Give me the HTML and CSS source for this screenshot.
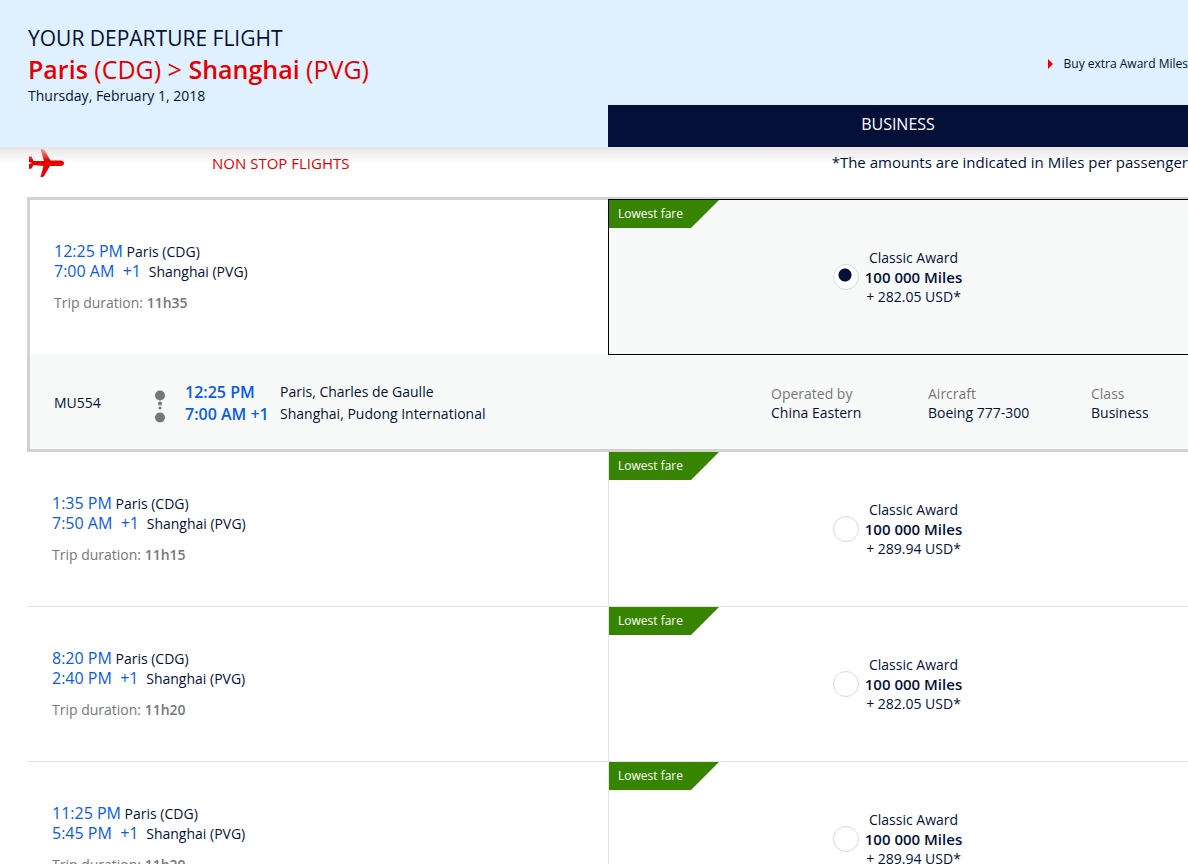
FILE: index.html
```html
<!DOCTYPE html>
<html lang="en">
<head>
<meta charset="utf-8">
<title>Your departure flight</title>
<link rel="stylesheet" href="styles.css">
</head>
<body>
<header class="header">
  <div class="trip">
    <h1 class="trip-title">YOUR DEPARTURE FLIGHT</h1>
    <h2 class="trip-route"><b>Paris</b> (CDG) &gt; <b>Shanghai</b> (PVG)</h2>
    <p class="trip-date">Thursday, February 1, 2018</p>
  </div>
  <div class="header-side">
    <a class="buy" href="#"><svg class="buy-icon" viewBox="0 0 5 10"><path d="M0 0L5 5L0 10Z" fill="#e80000"/></svg>Buy extra Award Miles</a>
    <div class="cabin">BUSINESS</div>
  </div>
</header>
<main class="results">
  <div class="legend">
    <svg class="plane" viewBox="0 0 36 28"><defs><linearGradient id="pg" x2="0" y2="1"><stop offset="0" stop-color="#e80000" stop-opacity=".3"/><stop offset=".4" stop-color="#e80000"/></linearGradient></defs><path fill="url(#pg)" d="M1 7.500H3.500L5.500 12H16L12.500 0H14.500Q16 0 17 2L22.500 11.500H33Q36 12 36 14Q36 16.500 33 17H22L16 27Q15.500 28 14 28H12.500L15.500 17L5.500 16L3.500 19.500L1 20V15L4 14L1 13Z"/></svg>
    <span class="nonstop">NON STOP FLIGHTS</span>
    <span class="note">*The amounts are indicated in Miles per passenger</span>
  </div>
  <section class="card">
    <div class="flight">
      <div class="times">
        <p class="line"><span class="time">12:25 PM</span> Paris (CDG)</p>
        <p class="line"><span class="time">7:00 AM &nbsp;+1&nbsp;</span> Shanghai (PVG)</p>
        <p class="duration">Trip duration: <b>11h35</b></p>
      </div>
      <div class="fare fare-selected">
        <span class="ribbon">Lowest fare</span>
        <label class="option"><input class="radio" type="radio" name="fare" checked><span class="price">Classic Award<b>100 000 Miles</b>+ 282.05 USD*</span></label>
      </div>
    </div>
    <div class="segment">
      <span class="number">MU554</span>
      <svg class="stops" viewBox="0 0 10 40"><g fill="#777"><circle cx="5" cy="12.500" r="5"/><circle cx="5" cy="20.500" r="2"/><circle cx="5" cy="25" r="1.500"/><circle cx="5" cy="34.500" r="5"/></g></svg>
      <div class="seg-times"><div>12:25 PM</div><div>7:00 AM +1</div></div>
      <div class="seg-places"><div>Paris, Charles de Gaulle</div><div>Shanghai, Pudong International</div></div>
      <dl class="facts">
        <div class="fact"><dt>Operated by</dt><dd>China Eastern</dd></div>
        <div class="fact"><dt>Aircraft</dt><dd>Boeing 777-300</dd></div>
        <div class="fact"><dt>Class</dt><dd>Business</dd></div>
      </dl>
    </div>
  </section>
  <div class="flight row">
    <div class="times">
      <p class="line"><span class="time">1:35 PM</span> Paris (CDG)</p>
      <p class="line"><span class="time">7:50 AM &nbsp;+1&nbsp;</span> Shanghai (PVG)</p>
      <p class="duration">Trip duration: <b>11h15</b></p>
    </div>
    <div class="fare">
      <span class="ribbon">Lowest fare</span>
      <label class="option"><input class="radio" type="radio" name="fare"><span class="price">Classic Award<b>100 000 Miles</b>+ 289.94 USD*</span></label>
    </div>
  </div>
  <div class="flight row">
    <div class="times">
      <p class="line"><span class="time">8:20 PM</span> Paris (CDG)</p>
      <p class="line"><span class="time">2:40 PM &nbsp;+1&nbsp;</span> Shanghai (PVG)</p>
      <p class="duration">Trip duration: <b>11h20</b></p>
    </div>
    <div class="fare">
      <span class="ribbon">Lowest fare</span>
      <label class="option"><input class="radio" type="radio" name="fare"><span class="price">Classic Award<b>100 000 Miles</b>+ 282.05 USD*</span></label>
    </div>
  </div>
  <div class="flight row">
    <div class="times">
      <p class="line"><span class="time">11:25 PM</span> Paris (CDG)</p>
      <p class="line"><span class="time">5:45 PM &nbsp;+1&nbsp;</span> Shanghai (PVG)</p>
      <p class="duration">Trip duration: <b>11h20</b></p>
    </div>
    <div class="fare">
      <span class="ribbon">Lowest fare</span>
      <label class="option"><input class="radio" type="radio" name="fare"><span class="price">Classic Award<b>100 000 Miles</b>+ 289.94 USD*</span></label>
    </div>
  </div>
</main>
</body>
</html>
```
FILE: styles.css
```css
* { box-sizing: border-box; }
body { margin: 0; background: #fff; color: #051039; font: 14px/20px "Open Sans", sans-serif; }
h1, h2, p, dl, dd { margin: 0; font-weight: 400; }
.header { display: grid; grid-template-columns: 1fr 1fr; padding-left: 28px; background: #dff1fe; }
.trip { padding: 24px 0 42px; }
.trip-title { font-size: 21px; line-height: 28px; }
.trip-route { color: #e80000; font-size: 25px; line-height: 34px; }
.trip-route b { font-weight: 600; }
.trip-date { font-size: 14px; line-height: 19px; }
.header-side { display: flex; flex-direction: column; justify-content: space-between; padding-top: 54px; }
.buy { align-self: flex-end; display: flex; align-items: center; gap: 11px; color: #051039; font-size: 12px; text-decoration: none; white-space: nowrap; }
.buy-icon { width: 5px; height: 10px; }
.cabin { height: 42px; background: #051039; color: #fff; font-size: 16px; line-height: 39px; text-align: center; }
.results { padding-left: 28px; background: linear-gradient(#e8e4e6, #fff 16px); }
.legend { display: flex; align-items: flex-start; height: 50px; padding-top: 2px; }
.plane { width: 36px; height: 28px; }
.nonstop { margin-left: 148px; padding-top: 4px; color: #e80000; font-size: 15px; }
.note { margin-left: auto; padding-top: 3px; font-size: 15px; }
.card { margin-left: -1px; border: 3px solid #d2d2d2; border-right: 0; background: #fff; }
.flight { display: grid; grid-template-columns: 1fr 1fr; }
.times { padding: 42px 0 41px 24px; }
.card .fare-selected { z-index: 1; margin: -1px 0 -1px -1px; border: 1px solid #000; border-right: 0; background: #f8faf9; }
.time { color: #0a5ce8; font-size: 16px; line-height: 16px; }
.duration { margin-top: 11px; color: #777; }
.duration b { font-weight: 600; }
.row { border-bottom: 1px solid #e3e3e3; }
.fare { position: relative; display: flex; align-items: center; justify-content: center; border-left: 1px solid #e3e3e3; }
.ribbon { position: absolute; top: 0; left: 0; width: 110px; height: 28px; padding-left: 9px; background: #378400; clip-path: polygon(0 0, 100% 0, 82px 100%, 0 100%); color: #fff; font-size: 12px; line-height: 28px; }
.option { display: flex; align-items: center; gap: 6px; padding-right: 2px; }
.radio { appearance: none; width: 26px; height: 26px; margin: 0; border: 1px solid #d9d9d9; border-radius: 50%; background: #fff; }
.radio:checked { background: radial-gradient(circle at 11px 10px, #051039 6px, #fff 7px); }
.price { text-align: center; }
.price b { display: block; font-size: 15px; line-height: 19px; font-weight: 600; }
.segment { display: flex; align-items: center; height: 95px; padding: 2px 0 0 24px; background: #f8faf9; }
.number { width: 101px; }
.stops { width: 10px; height: 40px; margin-right: 20px; }
.seg-times { width: 95px; color: #0a5ce8; font-size: 16px; font-weight: 600; line-height: 22px; white-space: nowrap; }
.seg-places { line-height: 22px; }
.facts { display: grid; grid-template-columns: 157px 163px 97px; margin-left: auto; line-height: 19px; }
.fact dt { color: #777; }
```
